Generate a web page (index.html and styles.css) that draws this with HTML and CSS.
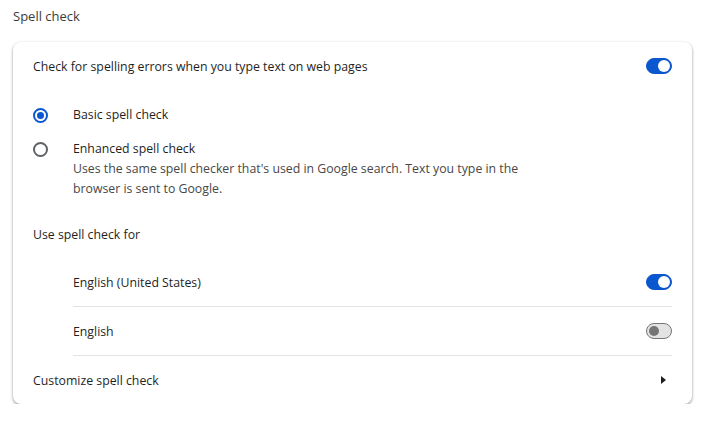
FILE: index.html
```html
<!DOCTYPE html>
<html lang="en">
<head>
  <meta charset="UTF-8" />
  <title>Spell check</title>
  <link rel="stylesheet" href="styles.css">
</head>
<body>
  <h2 class="page-title">Spell check</h2>

  <div class="card">
    <div class="row">
      <span>Check for spelling errors when you type text on web pages</span>
      <span class="toggle on"></span>
    </div>

    <div class="radio-group">
      <div class="radio-row">
        <span class="radio checked"></span>
        <span class="radio-label">Basic spell check</span>
      </div>
      <div class="radio-row">
        <span class="radio"></span>
        <div class="radio-label">
          <div>Enhanced spell check</div>
          <div class="desc">Uses the same spell checker that's used in Google search. Text you type in the browser is sent to Google.</div>
        </div>
      </div>
    </div>

    <div class="subhead">Use spell check for</div>

    <div class="lang-list">
      <div class="lang-row">
        <span>English (United States)</span>
        <span class="toggle on"></span>
      </div>
      <div class="lang-row">
        <span>English</span>
        <span class="toggle"></span>
      </div>
    </div>

    <div class="row link-row">
      <span>Customize spell check</span>
      <span class="arrow"></span>
    </div>
  </div>
</body>
</html>
```

FILE: styles.css
```css
* { margin: 0; padding: 0; box-sizing: border-box; }

body {
  font-family: "Open Sans", "Noto Sans", sans-serif;
  font-size: 12.3px;
  color: #1f1f1f;
  background: #fff;
  padding: 0 31px 0 13px;
}

.page-title {
  font-size: 13px;
  font-weight: normal;
  color: #3c3c3c;
  height: 32px;
  line-height: 32px;
  margin-bottom: 10px;
}

.card {
  background: #fff;
  border-radius: 8px;
  box-shadow: 0 1px 3px rgba(0, 0, 0, 0.3), 0 2px 3px rgba(0, 0, 0, 0.15);
  padding: 0 20px;
}

.row {
  display: flex;
  align-items: center;
  justify-content: space-between;
  height: 48px;
}

.toggle {
  position: relative;
  width: 26px;
  height: 16px;
  border-radius: 8px;
  background: #e3e3e3;
  border: 1px solid #747775;
}

.toggle::after {
  content: "";
  position: absolute;
  top: 2px;
  left: 2px;
  width: 10px;
  height: 10px;
  border-radius: 50%;
  background: #747775;
}

.toggle.on {
  background: #0b57d0;
  border-color: #0b57d0;
}

.toggle.on::after {
  top: 1px;
  left: auto;
  right: 1px;
  width: 12px;
  height: 12px;
  background: #fff;
}

.radio-group {
  padding-top: 9px;
}

.radio-row {
  display: flex;
  align-items: flex-start;
  padding: 6px 0;
}

.radio-row + .radio-row {
  padding-top: 8px;
}

.radio {
  width: 15px;
  height: 15px;
  margin: 3px 25px 0 0;
  border-radius: 50%;
  border: 2px solid #5f6368;
  flex-shrink: 0;
  position: relative;
}

.radio.checked {
  border-color: #0b57d0;
}

.radio.checked::after {
  content: "";
  position: absolute;
  top: 2px;
  left: 2px;
  width: 7px;
  height: 7px;
  border-radius: 50%;
  background: #0b57d0;
}

.radio-label {
  line-height: 20px;
}

.desc {
  color: #474747;
  max-width: 470px;
}

.subhead {
  height: 47px;
  line-height: 47px;
  margin-top: 6px;
}

.lang-list {
  padding-left: 40px;
}

.lang-row {
  display: flex;
  align-items: center;
  justify-content: space-between;
  height: 49px;
  border-bottom: 1px solid #e3e3e3;
}

.arrow {
  width: 0;
  height: 0;
  margin-right: 6px;
  border-top: 4px solid transparent;
  border-bottom: 4px solid transparent;
  border-left: 5px solid #1f1f1f;
}
```
